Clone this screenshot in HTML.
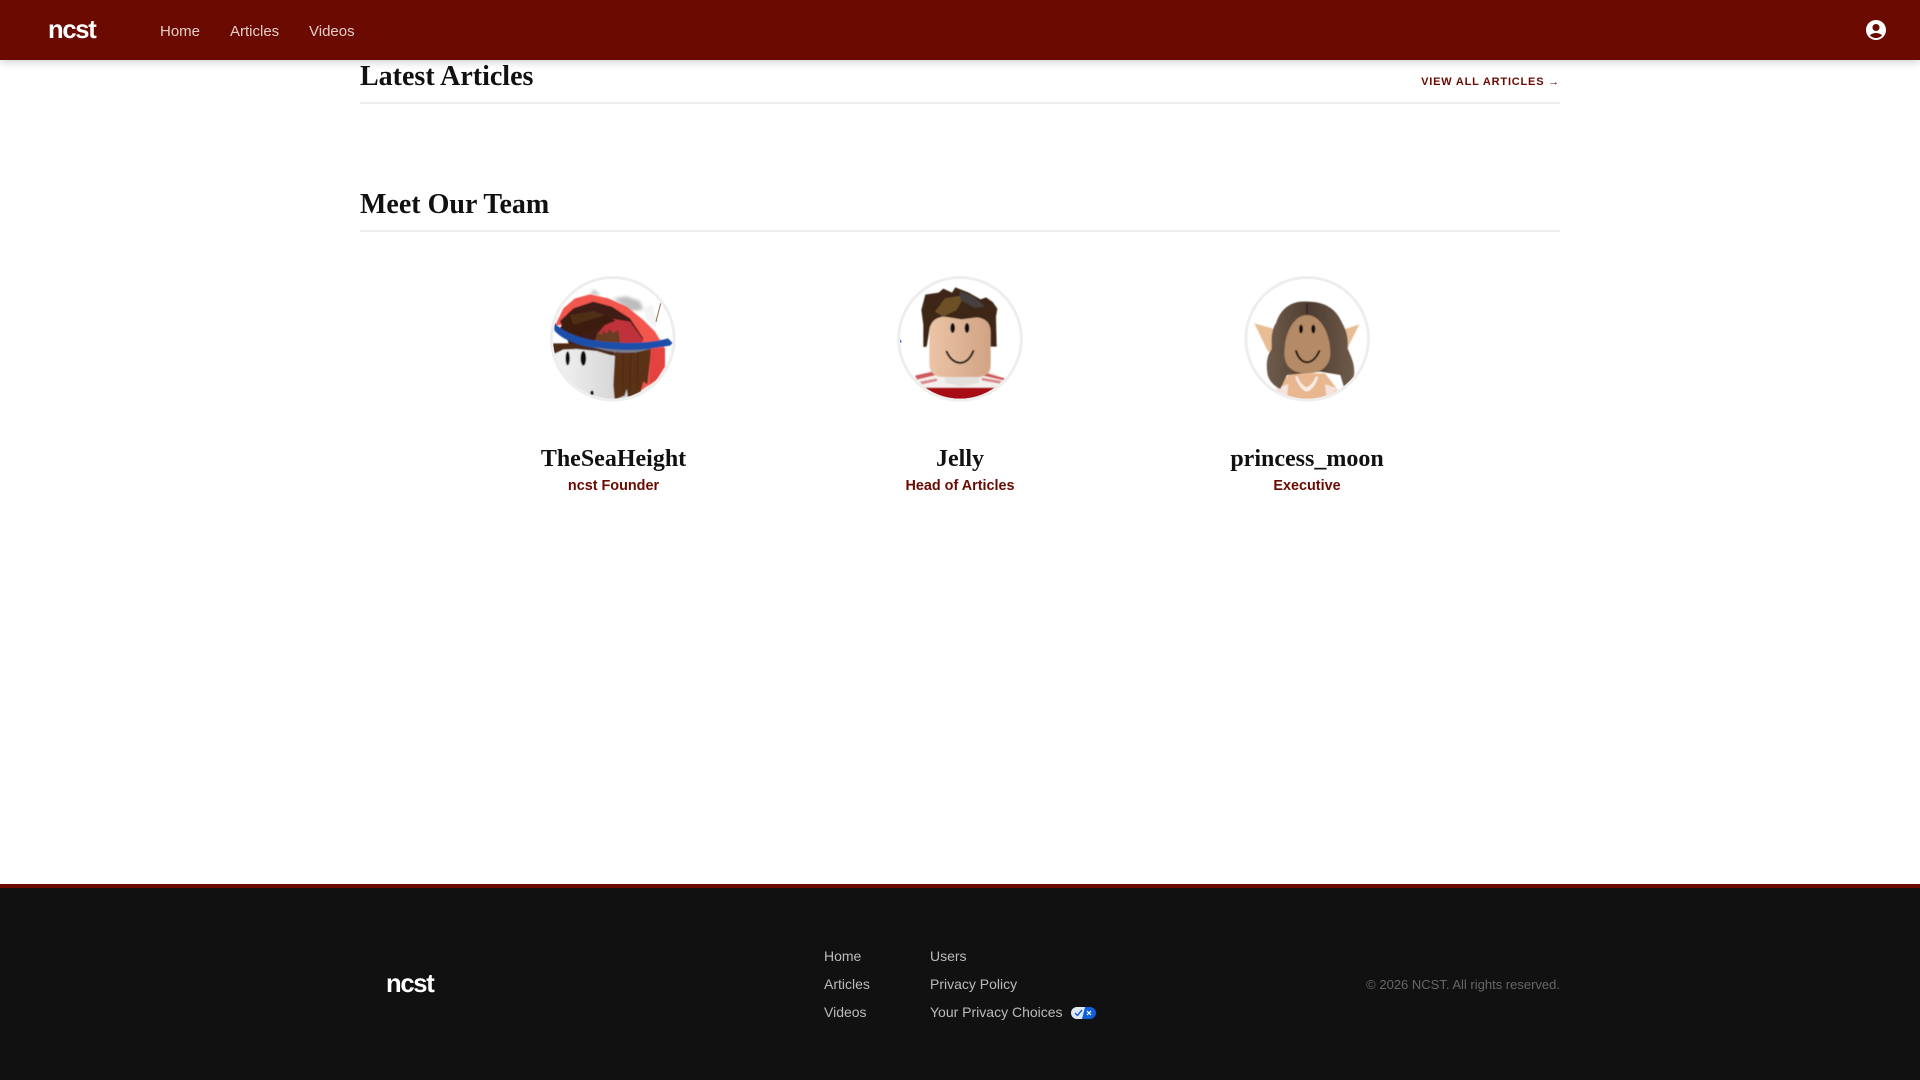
<!DOCTYPE html>
<html lang="en">
<head>
<meta charset="utf-8">
<title>ncst</title>
<style>
*{margin:0;padding:0;box-sizing:border-box}
html,body{width:1920px;height:1080px;overflow:hidden;background:#fff;font-family:"Liberation Sans",sans-serif}
a{color:inherit;text-decoration:none}
.abs{position:absolute;white-space:nowrap}
header{position:absolute;left:0;top:0;width:1920px;height:60px;background:#6b0a00;box-shadow:0 2px 8px rgba(0,0,0,.2);z-index:5}
.logo{font-weight:700;font-size:25.6px;letter-spacing:-1.28px;color:#fff;line-height:30px}
.nav{font-size:15px;color:rgba(255,255,255,.8);line-height:20px}
h2{position:absolute;left:360px;font:700 28px/34px "Liberation Serif",serif;color:#111;white-space:nowrap}
.rule{position:absolute;left:360px;width:1200px;height:2px;background:#eee}
.view{left:1360px;width:200px;text-align:right;top:75px;font-size:11px;font-weight:700;letter-spacing:.8px;color:#6b0a00;line-height:14px}
.card{position:absolute;width:300px;text-align:center;top:441px}
.name{font:700 24px/36px "Liberation Serif",serif;color:#111}
.role{font-size:14.4px;font-weight:700;color:#6b0a00;line-height:18px;margin-top:0}
.av{position:absolute;top:265px;width:170px;height:140px}
footer{position:absolute;left:0;top:884px;width:1920px;height:196px;background:#111;border-top:4px solid #6b0a00}
.fl{font-size:14px;color:#bbb;line-height:18px}
.copy{font-size:13px;color:#666;line-height:16px;right:360px;top:977px}
</style>
</head>
<body>
<header>
  <a class="abs logo" href="#" style="left:48px;top:15px">ncst</a>
  <a class="abs nav" href="#" style="left:160px;top:22px">Home</a>
  <a class="abs nav" href="#" style="left:230px;top:22px">Articles</a>
  <a class="abs nav" href="#" style="left:309px;top:22px">Videos</a>
  <svg class="abs" style="left:1864px;top:18px" width="24" height="24" viewBox="0 0 24 24" fill="#fff"><path d="M12 2C6.48 2 2 6.48 2 12s4.48 10 10 10 10-4.48 10-10S17.52 2 12 2zm0 4c1.93 0 3.5 1.57 3.5 3.5S13.93 13 12 13s-3.5-1.57-3.5-3.5S10.07 6 12 6zm0 14c-2.03 0-4.43-.82-6.14-2.88C7.55 15.8 9.68 15 12 15s4.45.8 6.14 2.12C16.43 19.18 14.03 20 12 20z"/></svg>
</header>

<h2 style="top:60px">Latest Articles</h2>
<a class="abs view" href="#">VIEW ALL ARTICLES →</a>
<div class="rule" style="top:102px"></div>

<h2 style="top:188px">Meet Our Team</h2>
<div class="rule" style="top:230px"></div>

<!-- Avatar 1 -->
<svg class="av" style="left:530px" viewBox="0 0 510 420">
  <defs>
    <clipPath id="c1"><circle cx="248.5" cy="221.5" r="180"/></clipPath>
    <filter id="b1"><feGaussianBlur stdDeviation="1.5"/></filter>
    <filter id="b2"><feGaussianBlur stdDeviation="5"/></filter>
    <linearGradient id="fa" x1="0" x2="1"><stop offset="0" stop-color="#f4f4f4"/><stop offset="1" stop-color="#d0d0d0"/></linearGradient>
  </defs>
  <path d="M180 88l12-14 20 18zM250 100l40-6 40 15 10 25-40 5z" fill="#bdbdbd" filter="url(#b2)"/>
  <path d="M340 130l25-12 20 50-10 20-25-25z" fill="#f4f4f4"/>
  <path d="M378 170l14-55" stroke="#9a6a4a" stroke-width="3" fill="none"/>
  <g clip-path="url(#c1)" filter="url(#b1)">
    <path d="M60 240h240v180H60z" fill="url(#fa)"/>
    <path d="M76 180L100 130l35-30 45-12 55 12 55 25 50 40 35 35 30 50 0 50-25 45-60 40-60-130-50-70z" fill="#f2564e"/>
    <path d="M90 168l40-38 60-20 55 15 55 35 40 60 -10 25H120z" fill="#3f1a12"/>
    <path d="M240 160l60 10 40 55-10 15-90-5-40-25z" fill="#c0333a"/>
    <path d="M84 196L120 150l70-12 35 12 32 17-57 24-50 24-45-8z" fill="#3a1f10"/>
    <path d="M120 150l70-12 35 12-95 30z" fill="#4f2d17"/>
    <path d="M195 228l8-28 12 10 5-15 10 12 8-15 10 12 18-8 6 55-50 0z" fill="#6a3d22"/>
    <path d="M60 235l60 0 130 20 10 18-20-3-40-12-60-6-40 2-25 12-15 25z" fill="#4d2a16"/>
    <path d="M256 250l-6 110 4 44 30-12 6-20 4 26 38-18 8-30 12 8 10-90 0-20z" fill="#5a3018"/>
    <path d="M362 250l43 0 0 55-25 40-22 15z" fill="#e4433f"/>
    <path d="M280 265l-3 115M302 262l-3 118M324 262l-2 110" stroke="#472511" stroke-width="2"/>
    <path d="M72 172c30 32 80 50 150 58 70 7 140 4 192-10l14 14-8 8c-70 12-130 18-190 12-80-8-135-30-157-58z" fill="#1e50aa"/>
    <path d="M190 246c60 10 120 12 180 4l-50 12c-50 4-90-2-130-16z" fill="#777c88"/>
    <ellipse cx="113" cy="280" rx="6.5" ry="21" fill="#111"/>
    <ellipse cx="160" cy="280" rx="8.5" ry="22" fill="#111"/>
    <ellipse cx="186" cy="384" rx="5" ry="7" fill="#111"/>
  </g>
  <circle cx="248.5" cy="221.5" r="184" fill="none" stroke="#eee" stroke-width="9"/>
</svg>

<!-- Avatar 2 -->
<svg class="av" style="left:880px" viewBox="0 0 510 420">
  <defs>
    <clipPath id="c2"><circle cx="240" cy="221.5" r="180"/></clipPath>
    <linearGradient id="f2" x1="0" x2="1"><stop offset="0" stop-color="#ebc4a5"/><stop offset="1" stop-color="#d0a384"/></linearGradient>
    <filter id="b3"><feGaussianBlur stdDeviation="1.2"/></filter>
  </defs>
  <g clip-path="url(#c2)" filter="url(#b3)">
    <path d="M100 345l55-30h170l55 30 30 90H70z" fill="#f4efec"/>
    <path d="M105 332l60-14 4 12-58 14zM300 318l75 22-4 6-71-16z" fill="#cf5a5c"/>
    <path d="M120 350l50-10 2 8-46 10zM305 338l60 10-6 8-54-10z" fill="#d9888a"/>
    <path d="M130 368h220l-10 60H150z" fill="#a80e14"/>
    <path d="M195 335h105l-5 18-50 12-50-12z" fill="#e4dfda"/>
    <path d="M130 246V180l-6-45 12-46 40-6 14-12 26 12 10-16 40 16 36 20 16-6 20 14 14 20-4 24 2 90h-22l-8-60-170 0-10 60z" fill="#3c2812"/>
    <path d="M165 140l30-40 60-10-25 45-40 20z" fill="#6e5028"/>
    <path d="M240 78l40 16 35 30-30 5-45-25z" fill="#45413c"/>
    <path d="M148 205c0-30 15-48 45-50l52 8 45-6c30 3 42 20 42 45l0 98c0 24-16 36-42 36H190c-26 0-42-14-42-40z" fill="url(#f2)"/>
    <ellipse cx="218" cy="189" rx="7" ry="15" fill="#111"/>
    <ellipse cx="261" cy="189" rx="7" ry="15" fill="#111"/>
    <path d="M200 260c20 45 62 45 80 -2" fill="none" stroke="#111" stroke-width="6" stroke-linecap="round"/>
  </g>
  <circle cx="240" cy="221.5" r="184" fill="none" stroke="#eee" stroke-width="9"/>
  <path d="M60 222l6 10-6 0z" fill="#3a62d8"/>
</svg>

<!-- Avatar 3 -->
<svg class="av" style="left:1225px" viewBox="0 0 510 420">
  <defs>
    <clipPath id="c3"><circle cx="246.5" cy="221.5" r="180"/></clipPath>
    <filter id="b4"><feGaussianBlur stdDeviation="1.2"/></filter>
    <linearGradient id="h3" x1="0" x2="1"><stop offset="0" stop-color="#6f5c4b"/><stop offset=".5" stop-color="#4e3d31"/><stop offset="1" stop-color="#6f5c4b"/></linearGradient>
  </defs>
  <g clip-path="url(#c3)" filter="url(#b4)">
    <path d="M88 175l65 18-5 70-20-5z" fill="#e8bd93"/>
    <path d="M403 178l-60 20 5 68 15-8z" fill="#e8bd93"/>
    <path d="M145 420l10-50 40-45h105l35 45 15 50z" fill="#e9b78f"/>
    <path d="M210 335c10 25 20 40 35 45 15-5 28-20 35-45l-8 0c-5 15-15 28-27 32-12-4-22-17-27-32z" fill="#fbeeea"/>
    <path d="M150 372l40-15-4 40zM340 372l-40-15 4 40z" fill="#f6e2dc"/>
    <path d="M246 110c-50-4-80 25-92 62-18 28-14 60-14 80-18 25-16 55-12 78 6 22 25 36 38 42l20-42 100-10 60 10 12 40c18-8 28-22 30-48 0-32-12-50-20-72 2-30-2-50-16-75-18-42-50-65-106-65z" fill="url(#h3)"/>
    <path d="M246 115v45" stroke="#33261d" stroke-width="5"/>
    <path d="M246 150c-40 0-68 55-68 115 0 35 20 60 68 60 46 0 70-26 70-60 0-60-30-115-70-115z" fill="#b58a66"/>
    <ellipse cx="228" cy="192" rx="6" ry="13" fill="#111"/>
    <ellipse cx="265" cy="192" rx="6" ry="13" fill="#111"/>
    <path d="M213 258c15 45 50 45 70 0" fill="none" stroke="#111" stroke-width="6" stroke-linecap="round"/>
  </g>
  <circle cx="246.5" cy="221.5" r="184" fill="none" stroke="#eee" stroke-width="9"/>
</svg>

<div class="card" style="left:463.5px"><div class="name">TheSeaHeight</div><div class="role">ncst Founder</div></div>
<div class="card" style="left:810px"><div class="name">Jelly</div><div class="role">Head of Articles</div></div>
<div class="card" style="left:1157px"><div class="name">princess_moon</div><div class="role">Executive</div></div>

<footer></footer>
<a class="abs logo" href="#" style="left:386px;top:969px">ncst</a>
<a class="abs fl" href="#" style="left:824px;top:947px">Home</a>
<a class="abs fl" href="#" style="left:824px;top:975px">Articles</a>
<a class="abs fl" href="#" style="left:824px;top:1003px">Videos</a>
<a class="abs fl" href="#" style="left:930px;top:947px">Users</a>
<a class="abs fl" href="#" style="left:930px;top:975px">Privacy Policy</a>
<a class="abs fl" href="#" style="left:930px;top:1003px">Your Privacy Choices</a>
<svg class="abs" style="left:1071px;top:1007px" width="25" height="12" viewBox="0 0 25 12">
  <rect width="25" height="12" rx="6" fill="#0f5fd8"/>
  <path d="M6 0h8l-3 12H6a6 6 0 0 1 0-12z" fill="#dfe8f5"/>
  <path d="M4 6l2.5 2.5L11 3" fill="none" stroke="#0f5fd8" stroke-width="1.4"/>
  <path d="M16 4l4 4M20 4l-4 4" stroke="#fff" stroke-width="1.2"/>
</svg>
<div class="abs copy">© 2026 NCST. All rights reserved.</div>
</body>
</html>
